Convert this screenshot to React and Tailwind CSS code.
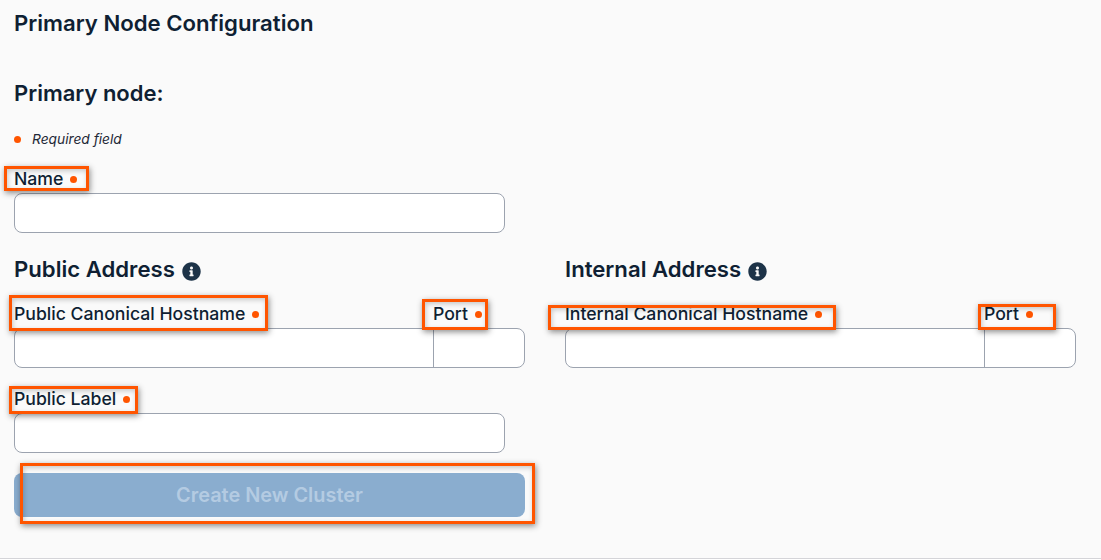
import { FaInfoCircle } from 'react-icons/fa';

// Annotation rectangle drawn on top of the form
function Mark({ className }) {
  return (
    <span className={`absolute border-[3px] border-[#ff5500] shadow-[1px_2px_6px_rgba(0,0,0,0.45),inset_1px_2px_5px_rgba(0,0,0,0.2)] pointer-events-none ${className}`} />
  );
}

function Label({ text, mark, className = '' }) {
  return (
    <label className={`relative flex items-center h-[24px] text-[17.65px] font-medium text-[#0f1f33] whitespace-nowrap ${className}`}>
      {text}
      <span className="ml-[7px] mt-[1px] w-[7px] h-[7px] rounded-full bg-[#ff5500]" />
      <Mark className={mark} />
    </label>
  );
}

function TextInput() {
  return <input className="block w-[491px] h-[40px] rounded-lg border border-[#9ca3af] bg-white" />;
}

function HostPort({ label, hostMark, portMark }) {
  return (
    <div className="relative">
      <div className="flex h-[24px]">
        <div className="w-[419px]">
          <Label text={label} mark={hostMark} className="w-fit" />
        </div>
        <Label text="Port" mark={portMark} />
      </div>
      <div className="flex w-[511px] h-[40px] mt-[2px] rounded-lg border border-[#9ca3af] bg-white">
        <input className="w-[419px] h-full border-r border-[#9ca3af] bg-transparent" />
        <input className="flex-1 min-w-0 h-full bg-transparent" />
      </div>
    </div>
  );
}

function SectionTitle({ children }) {
  return (
    <h3 className="flex items-center h-[30px] pt-[2px] text-[22.15px] font-semibold text-[#0f1f33]">
      {children}
      <FaInfoCircle className="ml-[7px] mt-[3px] text-[#1d3348]" size={19} />
    </h3>
  );
}

export default function App() {
  return (
    <div className="h-[559px] bg-[#fafafa] border-b border-[#d4d4d8] font-['Inter',sans-serif] overflow-hidden">
      <div className="pl-[14px]">
        <h1 className="pt-[9px] h-[38px] leading-[28px] text-[22.15px] font-semibold text-[#0f1f33]">Primary Node Configuration</h1>
        <h2 className="mt-[40px] h-[30px] leading-[30px] text-[22px] font-semibold text-[#0f1f33]">Primary node:</h2>
        <div className="flex items-center mt-[21px] h-[20px] text-[13.75px] italic text-[#1f2937]">
          <span className="w-[7px] h-[7px] rounded-full bg-[#ff5500]" />
          <span className="ml-[11px]">Required field</span>
        </div>

        <div className="mt-[18px]">
          <Label text="Name" mark="-left-[10px] -top-[1px] w-[85px] h-[25px]" />
        </div>
        <div className="mt-[2px]">
          <TextInput />
        </div>

        <div className="flex gap-[40px] mt-[21px]">
          <div>
            <SectionTitle>Public Address</SectionTitle>
            <div className="mt-[18px]">
              <HostPort
                label="Public Canonical Hostname"
                hostMark="-left-[5px] -top-[7px] w-[259px] h-[36px]"
                portMark="-left-[11px] -top-[3px] w-[66px] h-[31px]"
              />
            </div>
            <div className="mt-[19px]">
              <Label text="Public Label" mark="-left-[5px] -top-[1px] w-[129px] h-[28px]" />
            </div>
            <div className="mt-[2px]">
              <TextInput />
            </div>
            <div className="relative mt-[20px]">
              <button disabled className="w-[511px] h-[44px] pt-[2px] rounded-lg bg-[#8aadcf] text-[19.9px] font-semibold text-[#b4cbe2]">
                Create New Cluster
              </button>
              <Mark className="left-[6px] -top-[10px] w-[515px] h-[61px]" />
            </div>
          </div>

          <div>
            <SectionTitle>Internal Address</SectionTitle>
            <div className="mt-[18px]">
              <HostPort
                label="Internal Canonical Hostname"
                hostMark="-left-[17px] top-[3px] w-[288px] h-[25px]"
                portMark="-left-[6px] top-[2px] w-[78px] h-[26px]"
              />
            </div>
          </div>
        </div>
      </div>
    </div>
  );
}
